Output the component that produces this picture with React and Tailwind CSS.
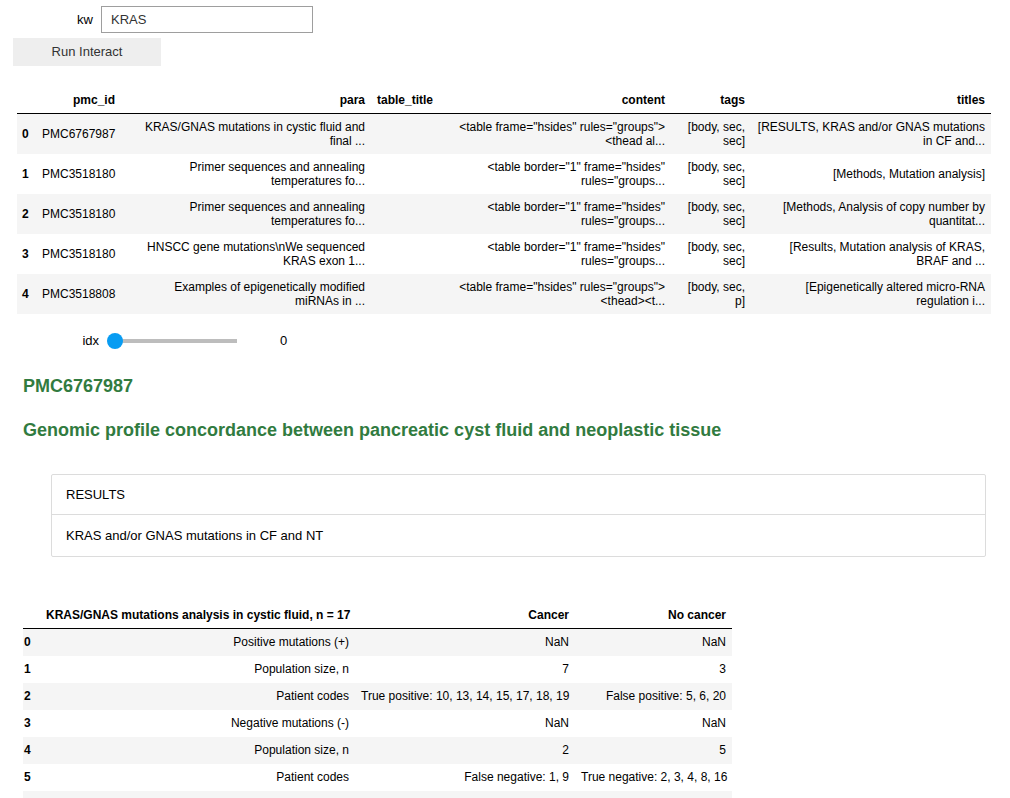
import React from "react";

const rows1 = [
  {
    i: "0",
    id: "PMC6767987",
    para: ["KRAS/GNAS mutations in cystic fluid and", "final ..."],
    content: ['<table frame="hsides" rules="groups">', "<thead al..."],
    tags: ["[body, sec,", "sec]"],
    titles: ["[RESULTS, KRAS and/or GNAS mutations", "in CF and..."],
  },
  {
    i: "1",
    id: "PMC3518180",
    para: ["Primer sequences and annealing", "temperatures fo..."],
    content: ['<table border="1" frame="hsides"', 'rules="groups...'],
    tags: ["[body, sec,", "sec]"],
    titles: ["[Methods, Mutation analysis]"],
  },
  {
    i: "2",
    id: "PMC3518180",
    para: ["Primer sequences and annealing", "temperatures fo..."],
    content: ['<table border="1" frame="hsides"', 'rules="groups...'],
    tags: ["[body, sec,", "sec]"],
    titles: ["[Methods, Analysis of copy number by", "quantitat..."],
  },
  {
    i: "3",
    id: "PMC3518180",
    para: ["HNSCC gene mutations\\nWe sequenced", "KRAS exon 1..."],
    content: ['<table border="1" frame="hsides"', 'rules="groups...'],
    tags: ["[body, sec,", "sec]"],
    titles: ["[Results, Mutation analysis of KRAS,", "BRAF and ..."],
  },
  {
    i: "4",
    id: "PMC3518808",
    para: ["Examples of epigenetically modified", "miRNAs in ..."],
    content: ['<table frame="hsides" rules="groups">', "<thead><t..."],
    tags: ["[body, sec,", "p]"],
    titles: ["[Epigenetically altered micro-RNA", "regulation i..."],
  },
];

const rows2 = [
  ["0", "Positive mutations (+)", "NaN", "NaN"],
  ["1", "Population size, n", "7", "3"],
  ["2", "Patient codes", "True positive: 10, 13, 14, 15, 17, 18, 19", "False positive: 5, 6, 20"],
  ["3", "Negative mutations (-)", "NaN", "NaN"],
  ["4", "Population size, n", "2", "5"],
  ["5", "Patient codes", "False negative: 1, 9", "True negative: 2, 3, 4, 8, 16"],
  ["", "", "", ""],
];

function Lines({ lines }) {
  return (
    <>
      {lines.map((l, k) => (
        <React.Fragment key={k}>
          {k > 0 && <br />}
          {l}
        </React.Fragment>
      ))}
    </>
  );
}

export default function App() {
  const font = { fontFamily: '"Liberation Sans", Arial, Helvetica, sans-serif' };
  const td = "px-[6px] py-[6px] text-right align-middle leading-[14px] whitespace-nowrap";
  const th = "px-[6px] py-[6px] text-right align-bottom leading-[14px] font-bold whitespace-nowrap";
  return (
    <div className="w-[1010px] min-h-[798px] bg-white text-black overflow-hidden" style={font}>
      {/* kw text input */}
      <div className="flex items-center pt-[6px]">
        <div className="w-[93px] text-right text-[13px] text-[#000000] leading-[27px]">kw</div>
        <div className="ml-[8px] w-[212px] h-[27px] border border-[#9e9e9e] flex items-center pl-[9px] text-[13px] text-[#333]">
          KRAS
        </div>
      </div>
      {/* button */}
      <div className="ml-[13px] mt-[5px] w-[148px] h-[28px] bg-[#eeeeee] flex items-center justify-center text-[13px] text-[#333]">
        Run Interact
      </div>

      {/* dataframe */}
      <table className="ml-[17px] mt-[21px] table-fixed border-collapse text-[12px] w-[974px]">
        <colgroup>
          <col className="w-[19px]" />
          <col className="w-[85px]" />
          <col className="w-[250px]" />
          <col className="w-[67px]" />
          <col className="w-[233px]" />
          <col className="w-[80px]" />
          <col className="w-[240px]" />
        </colgroup>
        <thead>
          <tr className="border-b border-black">
            <th className={th}></th>
            <th className={th}>pmc_id</th>
            <th className={th}>para</th>
            <th className={th}>table_title</th>
            <th className={th}>content</th>
            <th className={th}>tags</th>
            <th className={th}>titles</th>
          </tr>
        </thead>
        <tbody>
          {rows1.map((r, k) => (
            <tr key={k} className={k % 2 === 0 ? "bg-[#f5f5f5]" : "bg-white"}>
              <th className="pl-[5px] pr-0 py-[6px] text-left align-middle leading-[14px] font-bold">{r.i}</th>
              <td className={td}>{r.id}</td>
              <td className={td}>
                <Lines lines={r.para} />
              </td>
              <td className={td}></td>
              <td className={td}>
                <Lines lines={r.content} />
              </td>
              <td className={td}>
                <Lines lines={r.tags} />
              </td>
              <td className={td}>
                <Lines lines={r.titles} />
              </td>
            </tr>
          ))}
        </tbody>
      </table>

      {/* slider */}
      <div className="flex items-center mt-[13px] h-[28px]">
        <div className="w-[99px] text-right text-[13px]">idx</div>
        <div className="relative ml-[8px] w-[130px] h-[16px]">
          <div className="absolute left-[8px] right-0 top-[6px] h-[4px] bg-[#bdbdbd]" />
          <div className="absolute left-0 top-0 w-[16px] h-[16px] rounded-full bg-[#089cf2]" />
        </div>
        <div className="ml-[43px] text-[13px]">0</div>
      </div>

      {/* headings */}
      <div className="ml-[23px] mt-[21px] text-[18px] leading-[21px] font-bold text-[#317b40]">PMC6767987</div>
      <div className="ml-[23px] mt-[23px] text-[18px] leading-[21px] font-bold text-[#317b40]">
        Genomic profile concordance between pancreatic cyst fluid and neoplastic tissue
      </div>

      {/* titles box */}
      <div className="ml-[51px] mt-[33px] w-[935px] border border-[#dcdcdc] rounded-[2px] text-[13px]">
        <div className="h-[40px] flex items-center pl-[14px] border-b border-[#dcdcdc]">RESULTS</div>
        <div className="h-[41px] flex items-center pl-[14px]">KRAS and/or GNAS mutations in CF and NT</div>
      </div>

      {/* second table */}
      <table className="ml-[23px] mt-[45px] table-fixed border-collapse text-[12px] w-[709px]">
        <colgroup>
          <col className="w-[17px]" />
          <col className="w-[315px]" />
          <col className="w-[220px]" />
          <col className="w-[157px]" />
        </colgroup>
        <thead>
          <tr className="border-b border-black">
            <th className={th}></th>
            <th className={th}>KRAS/GNAS mutations analysis in cystic fluid, n = 17</th>
            <th className={th}>Cancer</th>
            <th className={th}>No cancer</th>
          </tr>
        </thead>
        <tbody>
          {rows2.map((r, k) => (
            <tr key={k} className={k % 2 === 0 ? "bg-[#f5f5f5]" : "bg-white"}>
              <th className="h-[27px] pl-[1px] pr-0 py-0 text-left align-middle leading-[14px] font-bold">{r[0]}</th>
              <td className="h-[27px] px-[6px] py-0 text-right align-middle leading-[14px] whitespace-nowrap">{r[1]}</td>
              <td className="h-[27px] px-[6px] py-0 text-right align-middle leading-[14px] whitespace-nowrap">{r[2]}</td>
              <td className="h-[27px] px-[6px] py-0 text-right align-middle leading-[14px] whitespace-nowrap">{r[3]}</td>
            </tr>
          ))}
        </tbody>
      </table>
    </div>
  );
}
